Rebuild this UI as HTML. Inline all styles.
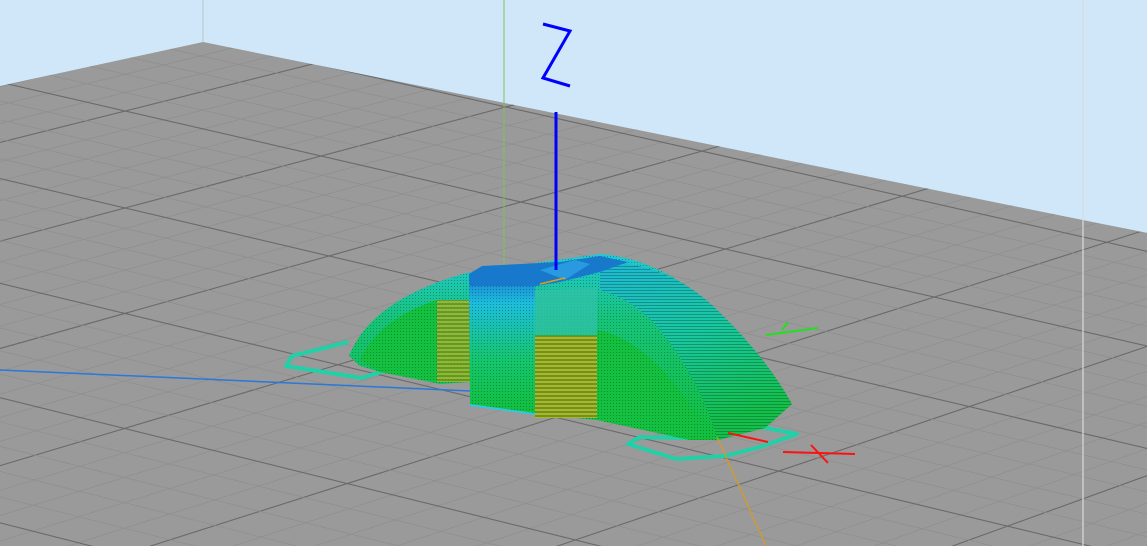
<!DOCTYPE html>
<html><head><meta charset="utf-8"><style>
html,body{margin:0;padding:0;background:#cfe7f8;width:1147px;height:546px;overflow:hidden;}
svg{display:block}
</style></head><body>
<svg id="s" width="1147" height="546" viewBox="0 0 1147 546" xmlns="http://www.w3.org/2000/svg">
<defs>
<clipPath id="floor"><polygon points="203,42 1147,233 1147,546 0,546 0,86"/></clipPath>
<linearGradient id="shell" x1="0" y1="0" x2="0" y2="1">
<stop offset="0" stop-color="#22c8d6"/><stop offset="0.35" stop-color="#16c47a"/><stop offset="1" stop-color="#12bf3c"/></linearGradient>
<linearGradient id="tower" x1="0" y1="0" x2="0" y2="1">
<stop offset="0" stop-color="#1a7fd6"/><stop offset="0.2" stop-color="#1cbedc"/><stop offset="0.6" stop-color="#14c670"/><stop offset="1" stop-color="#12bf3c"/></linearGradient>
<linearGradient id="rshell" x1="0" y1="0" x2="0.3" y2="1">
<stop offset="0" stop-color="#20b8d8"/><stop offset="0.5" stop-color="#18c8a0"/><stop offset="1" stop-color="#14c048"/></linearGradient>
<pattern id="stripes" width="6" height="3" patternUnits="userSpaceOnUse">
<rect y="2" width="6" height="1" fill="rgba(0,60,40,0.35)"/></pattern>
<pattern id="orange" width="6" height="4" patternUnits="userSpaceOnUse">
<rect width="6" height="4" fill="#3aa838"/><rect y="1" width="6" height="2" fill="#e0a010"/></pattern>
<pattern id="dots" width="3" height="3" patternUnits="userSpaceOnUse"><rect x="1" y="1" width="1" height="1" fill="rgba(0,0,0,0.28)"/></pattern>
</defs>
<rect width="1147" height="546" fill="#cfe7f8"/>
<line x1="203" y1="0" x2="203" y2="42" stroke="#b8c4cc" stroke-width="1"/>
<polygon points="203,42 1147,233 1147,546 0,546 0,86" fill="#9a9a9a"/>
<g id="grid" clip-path="url(#floor)"></g>
<line x1="1083" y1="0" x2="1083" y2="546" stroke="#d6dde2" stroke-width="1.2"/>
<line x1="504" y1="0" x2="504" y2="268" stroke="#80c060" stroke-width="1"/>
<line x1="0" y1="370" x2="470" y2="391" stroke="#2a78d8" stroke-width="1.5"/>
<polyline points="348,342 292,356 286,366 362,378 384,371" fill="none" stroke="#22d0a8" stroke-width="4" stroke-linejoin="round"/>
<polyline points="690,437 750,425 797,434 760,447 725,456 676,459 628,444 640,437 690,438" fill="none" stroke="#22d0a8" stroke-width="4" stroke-linejoin="round"/>
<path d="M349,356 Q372,298 470,272 L600,254 Q655,258 705,300 Q760,350 792,404 L765,428 L718,440 L690,440 L597,420 L535,414 L470,405 L470,382 L440,384 L380,372 L360,366 Z" fill="url(#shell)"/>
<path d="M349,356 Q372,298 470,272 L600,254 Q655,258 705,300 Q760,350 792,404 L765,428 L718,440 L690,440 L597,420 L535,414 L470,405 L470,382 L440,384 L380,372 L360,366 Z" fill="url(#dots)"/>
<path d="M360,360 Q380,318 437,300 L437,382 L380,372 Z" fill="#14c040"/>
<path d="M360,360 Q380,318 437,300 L437,382 L380,372 Z" fill="url(#dots)"/>
<path d="M600,262 Q665,262 712,305 Q765,355 792,404 L765,428 L718,440 Q700,380 660,330 Q635,300 600,290 Z" fill="url(#rshell)"/>
<path d="M600,262 Q665,262 712,305 Q765,355 792,404 L765,428 L718,440 Q700,380 660,330 Q635,300 600,290 Z" fill="url(#stripes)"/>
<path d="M597,330 Q650,340 700,420 L690,440 L597,420 Z" fill="#14c040"/>
<path d="M597,330 Q650,340 700,420 L690,440 L597,420 Z" fill="url(#dots)"/>
<rect x="437" y="300" width="33" height="82" fill="url(#orange)" opacity="0.85"/>
<rect x="535" y="335" width="62" height="83" fill="url(#orange)"/>
<path d="M535,290 L597,288 L597,335 L535,335 Z" fill="#30c0a8" opacity="0.8"/>
<path d="M469,276 L535,278 L535,414 L470,405 Z" fill="url(#tower)"/>
<path d="M469,276 L535,278 L535,414 L470,405 Z" fill="url(#dots)"/>
<line x1="470" y1="405" x2="535" y2="414" stroke="#30c8e0" stroke-width="2"/>
<path d="M469,274 L482,266 L560,262 L600,256 L628,262 L600,272 L560,282 L536,286 L470,286 Z" fill="#1878cc"/>
<path d="M540,270 L575,260 L590,264 L565,280 Z" fill="#2a9ae0"/>
<line x1="540" y1="284" x2="565" y2="278" stroke="#e0a010" stroke-width="1.5"/>
<line x1="556" y1="112" x2="556" y2="270" stroke="#0000ff" stroke-width="3"/>
<polyline points="543,24 570,31 543,78 570,86" fill="none" stroke="#0000ff" stroke-width="3"/>
<line x1="717" y1="437" x2="766" y2="546" stroke="#d89a20" stroke-width="1.2"/>
<line x1="728" y1="433" x2="768" y2="442" stroke="#ff1010" stroke-width="2"/>
<line x1="783" y1="452" x2="855" y2="454" stroke="#ff1010" stroke-width="2"/>
<line x1="811" y1="445" x2="828" y2="463" stroke="#ff1010" stroke-width="2"/>
<line x1="766" y1="335" x2="818" y2="328" stroke="#20e020" stroke-width="2"/>
<line x1="782" y1="330" x2="788" y2="322" stroke="#20e020" stroke-width="2"/>
</svg>
<script>
(function(){
var x0=321,y0=156,x1=521,y1=202,x2=329,y2=256,x3=125,y3=208;
var dx1=x1-x2,dx2=x3-x2,dx3=x0-x1+x2-x3,dy1=y1-y2,dy2=y3-y2,dy3=y0-y1+y2-y3;
var den=dx1*dy2-dx2*dy1;
var g=(dx3*dy2-dx2*dy3)/den,h=(dx1*dy3-dx3*dy1)/den;
var a=x1-x0+g*x1,b=x3-x0+h*x3,c=x0,d=y1-y0+g*y1,e=y3-y0+h*y3,f=y0;
function P(u,v){var w=g*u+h*v+1;return [(a*u+b*v+c)/w,(d*u+e*v+f)/w];}
var G=document.getElementById('grid'),out='';
function ln(p,q,major){out+='<line x1="'+p[0].toFixed(1)+'" y1="'+p[1].toFixed(1)+'" x2="'+q[0].toFixed(1)+'" y2="'+q[1].toFixed(1)+'" stroke="'+(major?'#6a6a6a':'#8e8e8e')+'" stroke-width="'+(major?1.1:0.7)+'"/>';}
var umin=-8,umax=10,vmin=-3,vmax=12;
for(var k=umin*5;k<=umax*5;k++){var u=k/5;ln(P(u,vmin),P(u,vmax),k%5==0);}
for(var k=vmin*5;k<=vmax*5;k++){var v=k/5;ln(P(umin,v),P(umax,v),k%5==0);}
G.innerHTML=out;
})();
</script>
</body></html>
